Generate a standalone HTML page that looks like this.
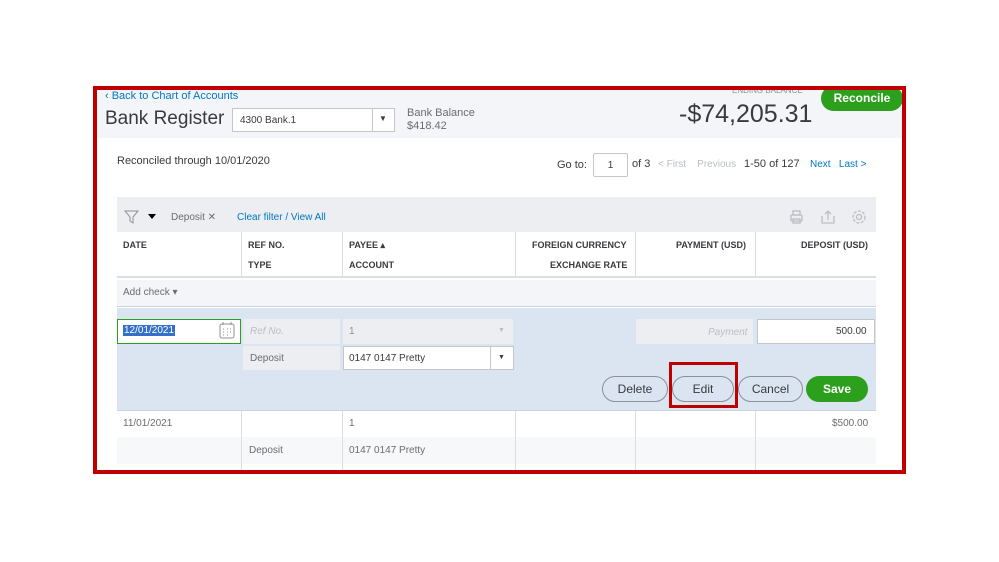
<!DOCTYPE html>
<html><head><style>
*{margin:0;padding:0;box-sizing:border-box}
body{width:999px;height:562px;background:#fff;position:relative;overflow:hidden;font-family:"Liberation Sans",sans-serif;color:#393a3d}
.a{position:absolute;white-space:nowrap}
.s{font-size:11px}
.b{font-weight:bold;font-size:9px;color:#393a3d}
.blue{color:#0077c5}
.vl{position:absolute;width:1px;background:#dcdde0}
.btn{position:absolute;border:1px solid #8d9096;border-radius:14px;font-size:12px;text-align:center;line-height:24px;background:#dbe5f1}
</style></head><body>
<div class="a" style="left:97px;top:90px;width:805px;height:48px;background:#f4f5f8"></div>
<div class="a s blue" style="left:105px;top:90px">‹ Back to Chart of Accounts</div>
<div class="a" style="left:105px;top:108px;font-size:19px;color:#393a3d">Bank Register</div>
<div class="a" style="left:232px;top:108px;width:163px;height:24px;background:#fff;border:1px solid #c4c6ca"></div>
<div class="a" style="left:240px;top:115px;font-size:10px">4300 Bank.1</div>
<div class="a" style="left:372px;top:109px;width:1px;height:22px;background:#c4c6ca"></div>
<div class="a" style="left:379px;top:114px;font-size:8px">▼</div>
<div class="a s" style="left:407px;top:107px;color:#6b6c72">Bank Balance</div>
<div class="a s" style="left:407px;top:120px;color:#6b6c72">$418.42</div>
<div class="a" style="left:732px;top:86px;font-size:8px;color:#8d9096">ENDING BALANCE</div>
<div class="a" style="left:679px;top:100px;font-size:25px;color:#393a3d">-$74,205.31</div>
<div class="a" style="left:821px;top:86px;width:82px;height:25px;background:#2ca01c;border-radius:13px;color:#fff;font-weight:bold;font-size:12px;text-align:center;line-height:25px">Reconcile</div>
<div class="a s" style="left:117px;top:155px">Reconciled through 10/01/2020</div>
<div class="a s" style="left:557px;top:159px">Go to:</div>
<div class="a" style="left:593px;top:153px;width:35px;height:24px;border:1px solid #c4c6ca;border-radius:2px;font-size:10px;text-align:center;line-height:24px">1</div>
<div class="a s" style="left:632px;top:158px">of 3</div>
<div class="a" style="left:658px;top:159px;font-size:10px;color:#babec5">&lt; First &nbsp;&nbsp; Previous</div>
<div class="a s" style="left:744px;top:158px">1-50 of 127</div>
<div class="a" style="left:810px;top:159px;font-size:10px;color:#0077c5">Next &nbsp;&nbsp;Last &gt;</div>
<div class="a" style="left:117px;top:197px;width:759px;height:35px;background:#eceef1"></div>
<svg class="a" style="left:124px;top:209px" width="36" height="16"><path d="M1 2h13l-5 6v6l-3-2v-4z" fill="none" stroke="#8d9096"/><path d="M24 5h8l-4 5z" fill="#000"/></svg>
<div class="a" style="left:171px;top:212px;font-size:10px;color:#6b6c72">Deposit ✕</div>
<div class="a" style="left:237px;top:212px;font-size:10px;color:#0077c5">Clear filter / View All</div>
<svg class="a" style="left:788px;top:209px" width="82" height="16" fill="none" stroke="#babec5" stroke-width="1.3"><rect x="3" y="6" width="11" height="6" rx="1"/><rect x="5" y="2" width="7" height="4"/><rect x="5" y="10" width="7" height="4"/><path d="M34 7v7h12V7M40 11V2M37 5l3-3 3 3"/><circle cx="71" cy="8" r="2.5"/><circle cx="71" cy="8" r="6" stroke-dasharray="3 1.5"/></svg>
<div class="a" style="left:117px;top:232px;width:759px;height:46px;background:#fff;border-bottom:2px solid #dcdde0"></div>
<div class="vl" style="left:241px;top:232px;height:46px"></div>
<div class="vl" style="left:342px;top:232px;height:46px"></div>
<div class="vl" style="left:515px;top:232px;height:46px"></div>
<div class="vl" style="left:635px;top:232px;height:46px"></div>
<div class="vl" style="left:755px;top:232px;height:46px"></div>
<div class="a b" style="left:123px;top:240px">DATE</div>
<div class="a b" style="left:248px;top:240px">REF NO.</div>
<div class="a b" style="left:248px;top:260px">TYPE</div>
<div class="a b" style="left:349px;top:240px">PAYEE ▴</div>
<div class="a b" style="left:349px;top:260px">ACCOUNT</div>
<div class="a b" style="left:532px;top:240px">FOREIGN CURRENCY</div>
<div class="a b" style="left:550px;top:260px">EXCHANGE RATE</div>
<div class="a b" style="left:676px;top:240px">PAYMENT (USD)</div>
<div class="a b" style="left:801px;top:240px">DEPOSIT (USD)</div>
<div class="a" style="left:117px;top:280px;width:759px;height:27px;background:#f4f5f8;border-bottom:1px solid #c9d4e3"></div>
<div class="a" style="left:123px;top:287px;font-size:10px;color:#6b6c72">Add check ▾</div>
<div class="a" style="left:117px;top:308px;width:759px;height:102px;background:#dbe5f1"></div>
<div class="a" style="left:117px;top:319px;width:124px;height:25px;background:#fff;border:1px solid #2ca01c"></div>
<div class="a" style="left:123px;top:325px;font-size:10px;background:#3470c8;color:#fff;padding:0 1px">12/01/2021</div>
<svg class="a" style="left:219px;top:321px" width="16" height="18" fill="none" stroke="#8d9096"><rect x="1" y="3" width="14" height="14" rx="2"/><path d="M4 1v3M12 1v3M4 8h1M8 8h1M11 8h1M4 11h1M8 11h1M11 11h1M4 14h1M8 14h1"/></svg>
<div class="a" style="left:243px;top:319px;width:97px;height:25px;background:#eceef1"></div>
<div class="a" style="left:250px;top:326px;font-size:10px;color:#babec5;font-style:italic">Ref No.</div>
<div class="a" style="left:343px;top:319px;width:170px;height:25px;background:#eceef1"></div>
<div class="a" style="left:349px;top:326px;font-size:10px;color:#8d9096">1</div>
<div class="a" style="left:498px;top:327px;font-size:7px;color:#babec5">▼</div>
<div class="a" style="left:636px;top:319px;width:117px;height:25px;background:#eceef1"></div>
<div class="a" style="left:708px;top:327px;font-size:10px;color:#babec5;font-style:italic">Payment</div>
<div class="a" style="left:757px;top:319px;width:118px;height:25px;background:#fff;border:1px solid #c4c6ca"></div>
<div class="a" style="left:836px;top:326px;font-size:10px">500.00</div>
<div class="a" style="left:243px;top:346px;width:97px;height:24px;background:#eceef1"></div>
<div class="a" style="left:250px;top:353px;font-size:10px;color:#6b6c72">Deposit</div>
<div class="a" style="left:343px;top:346px;width:171px;height:24px;background:#fff;border:1px solid #c4c6ca"></div>
<div class="a" style="left:349px;top:353px;font-size:10px">0147 0147 Pretty</div>
<div class="a" style="left:490px;top:347px;width:1px;height:22px;background:#c4c6ca"></div>
<div class="a" style="left:498px;top:354px;font-size:7px">▼</div>
<div class="btn" style="left:602px;top:376px;width:66px;height:26px">Delete</div>
<div class="btn" style="left:672px;top:376px;width:62px;height:26px">Edit</div>
<div class="btn" style="left:738px;top:376px;width:65px;height:26px">Cancel</div>
<div class="a" style="left:806px;top:376px;width:62px;height:26px;border-radius:13px;background:#2ca01c;color:#fff;font-weight:bold;font-size:12px;text-align:center;line-height:26px">Save</div>
<div class="a" style="left:669px;top:362px;width:69px;height:46px;border:3px solid #c00000"></div>
<div class="a" style="left:117px;top:410px;width:759px;height:54px;background:#fff;border-top:1px solid #c9d4e3;border-bottom:1px solid #dcdde0"></div>
<div class="a" style="left:117px;top:437px;width:759px;height:27px;background:#f7f8fa"></div>
<div class="vl" style="left:241px;top:411px;height:62px"></div>
<div class="vl" style="left:342px;top:411px;height:62px"></div>
<div class="vl" style="left:515px;top:411px;height:62px"></div>
<div class="vl" style="left:635px;top:411px;height:62px"></div>
<div class="vl" style="left:755px;top:411px;height:62px"></div>
<div class="a" style="left:123px;top:418px;font-size:10px;color:#6b6c72">11/01/2021</div>
<div class="a" style="left:349px;top:418px;font-size:10px;color:#6b6c72">1</div>
<div class="a" style="left:832px;top:418px;font-size:10px;color:#6b6c72">$500.00</div>
<div class="a" style="left:249px;top:445px;font-size:10px;color:#6b6c72">Deposit</div>
<div class="a" style="left:349px;top:445px;font-size:10px;color:#6b6c72">0147 0147 Pretty</div>
<div class="a" style="left:93px;top:86px;width:813px;height:388px;border:4px solid #c00000"></div>
</body></html>
